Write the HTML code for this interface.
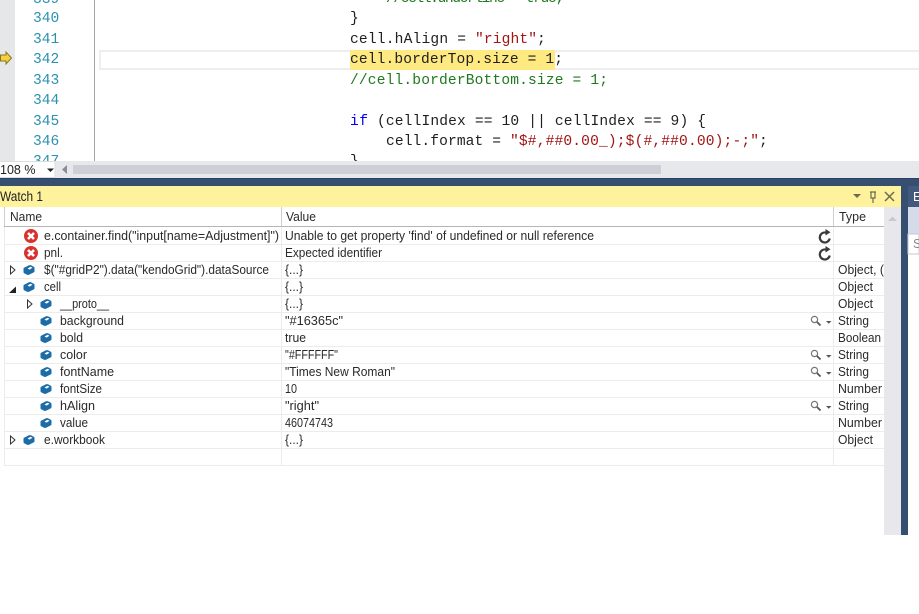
<!DOCTYPE html>
<html><head><meta charset="utf-8"><style>
html,body{margin:0;padding:0;background:#fff;width:919px;height:614px;overflow:hidden}
svg{display:block}
.c{font-family:"Liberation Mono",monospace;font-size:14.6px}
.u{font-family:"Liberation Sans",sans-serif;font-size:12.5px;fill:#2a2a2a}
.n{fill:#2b91af}.k{fill:#1f1f1f}.g{fill:#1f7a1f}.r{fill:#a31515}.b{fill:#0000ff}
.l{stroke:#ececec;stroke-width:1}
</style></head><body>
<svg width="919" height="614" viewBox="0 0 919 614" xmlns="http://www.w3.org/2000/svg">
<rect width="919" height="614" fill="#fff"/>
<rect x="0" y="0" width="15" height="161" fill="#e6e7e8"/>
<rect x="94" y="0" width="1" height="161" fill="#a5a5a5"/>
<rect x="100" y="51" width="830" height="18" fill="#fff" stroke="#eeeeee" stroke-width="2"/>
<rect x="350" y="50" width="205" height="20" fill="#ffe981"/>
<path d="M0.500 55h5.500v-3l5.500 6-5.500 6v-3h-5.500z" fill="#f5d040" stroke="#8a7520" stroke-width="1"/>

<g class="c n">
<text x="33" y="3">339</text>
<text x="33" y="22">340</text><text x="33" y="43">341</text><text x="33" y="63">342</text><text x="33" y="84">343</text><text x="33" y="104">344</text><text x="33" y="125">345</text><text x="33" y="145">346</text><text x="33" y="165">347</text>
</g>
<g class="c">
<text x="386" y="2" class="g" textLength="178">//cell.underline = true;</text>
<text x="350" y="22" class="k">}</text>
<text x="350" y="43" class="k" textLength="116">cell.hAlign =</text><text x="475" y="43" class="r" textLength="62">"right"</text><text x="537" y="43" class="k">;</text>
<text x="350" y="63" class="k" textLength="213">cell.borderTop.size = 1;</text>
<text x="350" y="84" class="g" textLength="258">//cell.borderBottom.size = 1;</text>
<text x="350" y="125" class="b" textLength="18">if</text><text x="377" y="125" class="k" textLength="329">(cellIndex == 10 || cellIndex == 9) {</text>
<text x="386" y="145" class="k" textLength="115">cell.format =</text><text x="510" y="145" class="r" textLength="249">"$#,##0.00_);$(#,##0.00);-;"</text><text x="759" y="145" class="k">;</text>
<text x="350" y="165" class="k">}</text>
</g>

<rect x="0" y="161" width="919" height="17" fill="#e7e8ec"/>
<rect x="-1" y="161.500" width="56" height="16" fill="#fff" stroke="#dcdde2" stroke-width="1"/>
<text x="0" y="174" style="font-family:'Liberation Sans',sans-serif;font-size:12.500px" fill="#222">108 %</text>
<path d="M47 168.500h7l-3.500 3.500z" fill="#222"/>
<path d="M67 165v9l-5-4.500z" fill="#8b8c93"/>
<rect x="73" y="165" width="588" height="9" fill="#cdced6"/>

<rect x="0" y="178" width="919" height="357" fill="#364e6f"/>
<rect x="0" y="178" width="919" height="1" fill="#2d4163"/>
<rect x="0" y="186" width="901" height="21" fill="#fff29d"/>
<text x="0" y="201" style="font-family:'Liberation Sans',sans-serif;font-size:13.500px" fill="#222" textLength="43" lengthAdjust="spacingAndGlyphs">Watch 1</text>
<path d="M853 194h8l-4 4z" fill="#6d6a50"/>
<path d="M870 192h6M871 192v6h4v-6M873 198v5" fill="none" stroke="#6b6950" stroke-width="1.200"/>
<path d="M885 192l9 9M894 192l-9 9" stroke="#6b6950" stroke-width="1.500" fill="none"/>

<rect x="0" y="207" width="884" height="328" fill="#fff"/>
<rect x="884" y="207" width="17" height="328" fill="#e8e8ec"/>
<path d="M888 221l4.500-4.500 4.500 4.500z" fill="#c8c9ce"/>
<rect x="908" y="186" width="11" height="21" fill="#41597d"/>
<text x="913" y="201" class="u" style="fill:#fff">E</text>
<rect x="908" y="207" width="11" height="408" fill="#fff"/>
<rect x="908" y="207" width="11" height="27" fill="#d6dbe9"/>
<rect x="908" y="234" width="11" height="20" fill="#fff" stroke="#c5c9d6"/>
<text x="913" y="248" class="u" style="fill:#888">S</text>
<rect x="901" y="535" width="18" height="79" fill="#fff"/>

<g>
<rect x="4" y="226" width="880" height="1" fill="#b5b5b5"/>
<path class="l" d="M4 244.500H884M4 261.500H884M4 278.500H884M4 295.500H884M4 312.500H884M4 329.500H884M4 346.500H884M4 363.500H884M4 380.500H884M4 397.500H884M4 414.500H884M4 431.500H884M4 448.500H884M4 465.500H884"/>
<path d="M4.500 227V466M281.500 227V466M833.500 227V466" stroke="#ececec" stroke-width="1"/>
<path d="M4.500 207V226M281.500 207V226M833.500 207V226" stroke="#cfcfcf" stroke-width="1"/>
</g>

<g class="u">
<text x="10" y="221" textLength="32" lengthAdjust="spacingAndGlyphs">Name</text><text x="286" y="221" textLength="30" lengthAdjust="spacingAndGlyphs">Value</text><text x="839" y="221" textLength="27" lengthAdjust="spacingAndGlyphs">Type</text>

<text x="44" y="240" textLength="235" lengthAdjust="spacingAndGlyphs">e.container.find("input[name=Adjustment]")</text><text x="285" y="240" textLength="309" lengthAdjust="spacingAndGlyphs">Unable to get property 'find' of undefined or null reference</text>
<text x="44" y="257" textLength="19" lengthAdjust="spacingAndGlyphs">pnl.</text><text x="285" y="257" textLength="97" lengthAdjust="spacingAndGlyphs">Expected identifier</text>
<text x="44" y="274" textLength="225" lengthAdjust="spacingAndGlyphs">$("#gridP2").data("kendoGrid").dataSource</text><text x="285" y="274" textLength="18" lengthAdjust="spacingAndGlyphs">{...}</text><text x="838" y="274" textLength="46" lengthAdjust="spacingAndGlyphs">Object, (</text>
<text x="44" y="291" textLength="17" lengthAdjust="spacingAndGlyphs">cell</text><text x="285" y="291" textLength="18" lengthAdjust="spacingAndGlyphs">{...}</text><text x="838" y="291" textLength="35" lengthAdjust="spacingAndGlyphs">Object</text>
<text x="60" y="308" textLength="49" lengthAdjust="spacingAndGlyphs">__proto__</text><text x="285" y="308" textLength="18" lengthAdjust="spacingAndGlyphs">{...}</text><text x="838" y="308" textLength="35" lengthAdjust="spacingAndGlyphs">Object</text>
<text x="60" y="325" textLength="64" lengthAdjust="spacingAndGlyphs">background</text><text x="285" y="325" textLength="58" lengthAdjust="spacingAndGlyphs">"#16365c"</text><text x="838" y="325" textLength="31" lengthAdjust="spacingAndGlyphs">String</text>
<text x="60" y="342" textLength="23" lengthAdjust="spacingAndGlyphs">bold</text><text x="285" y="342" textLength="21" lengthAdjust="spacingAndGlyphs">true</text><text x="838" y="342" textLength="43" lengthAdjust="spacingAndGlyphs">Boolean</text>
<text x="60" y="359" textLength="27" lengthAdjust="spacingAndGlyphs">color</text><text x="285" y="359" textLength="53" lengthAdjust="spacingAndGlyphs">"#FFFFFF"</text><text x="838" y="359" textLength="31" lengthAdjust="spacingAndGlyphs">String</text>
<text x="60" y="376" textLength="54" lengthAdjust="spacingAndGlyphs">fontName</text><text x="285" y="376" textLength="110" lengthAdjust="spacingAndGlyphs">"Times New Roman"</text><text x="838" y="376" textLength="31" lengthAdjust="spacingAndGlyphs">String</text>
<text x="60" y="393" textLength="42" lengthAdjust="spacingAndGlyphs">fontSize</text><text x="285" y="393" textLength="12" lengthAdjust="spacingAndGlyphs">10</text><text x="838" y="393" textLength="44" lengthAdjust="spacingAndGlyphs">Number</text>
<text x="60" y="410" textLength="35" lengthAdjust="spacingAndGlyphs">hAlign</text><text x="285" y="410" textLength="34" lengthAdjust="spacingAndGlyphs">"right"</text><text x="838" y="410" textLength="31" lengthAdjust="spacingAndGlyphs">String</text>
<text x="60" y="427" textLength="28" lengthAdjust="spacingAndGlyphs">value</text><text x="285" y="427" textLength="48" lengthAdjust="spacingAndGlyphs">46074743</text><text x="838" y="427" textLength="44" lengthAdjust="spacingAndGlyphs">Number</text>
<text x="44" y="444" textLength="61" lengthAdjust="spacingAndGlyphs">e.workbook</text><text x="285" y="444" textLength="18" lengthAdjust="spacingAndGlyphs">{...}</text><text x="838" y="444" textLength="35" lengthAdjust="spacingAndGlyphs">Object</text>
</g>

<defs>
<g id="cube"><path d="M-5.500-1.500Q-5.500-2 -4.500-2.500L0-4.700Q1-5 2-4.700L4.800-3.300Q5.500-3 5.500-2V1.500Q5.500 2 4.500 2.500L0 4.700Q-1 5 -2 4.700L-4.800 3.300Q-5.500 3-5.500 2z" fill="#1c6ca8"/><path d="M-1.500-1.500L1.500-3.200 3.500-2.200 0.500-0.400z" fill="#fff"/></g>
<g id="err"><circle r="7" fill="#d9322d"/><path d="M-3-3L3 3M3-3L-3 3" stroke="#fff" stroke-width="2.600"/></g>
<path id="tri" d="M0 0v8l4.500-4z" fill="#fff" stroke="#333" stroke-width="1"/>
<g id="ref"><path d="M4.700 1.500A5 5 0 1 1 1 -4.400" fill="none" stroke="#3a3a3a" stroke-width="2.200"/><path d="M0.500-8L0.500-1.500 5.500-4.800z" fill="#3a3a3a"/></g>
<g id="vis"><circle cx="3.500" cy="3.500" r="3.100" fill="none" stroke="#777" stroke-width="1.200"/><path d="M6 6L9.500 9.500" stroke="#555" stroke-width="1.800"/><path d="M15 5h5.500l-2.750 2.800z" fill="#555"/></g>
</defs>

<use href="#err" x="31" y="236"/>
<use href="#err" x="31" y="253"/>
<use href="#tri" x="10.500" y="266"/>
<path d="M9 293l7-6.500v6.500z" fill="#222"/>
<use href="#tri" x="27.500" y="300"/>
<use href="#tri" x="10.500" y="436"/>
<use href="#cube" x="29" y="270"/>
<use href="#cube" x="29" y="287"/>
<use href="#cube" x="46" y="304"/>
<use href="#cube" x="46" y="321"/>
<use href="#cube" x="46" y="338"/>
<use href="#cube" x="46" y="355"/>
<use href="#cube" x="46" y="372"/>
<use href="#cube" x="46" y="389"/>
<use href="#cube" x="46" y="406"/>
<use href="#cube" x="46" y="423"/>
<use href="#cube" x="29" y="440"/>
<use href="#ref" x="825" y="237"/>
<use href="#ref" x="825" y="254"/>
<use href="#vis" x="811" y="316"/>
<use href="#vis" x="811" y="350"/>
<use href="#vis" x="811" y="367"/>
<use href="#vis" x="811" y="401"/>
</svg>
</body></html>
